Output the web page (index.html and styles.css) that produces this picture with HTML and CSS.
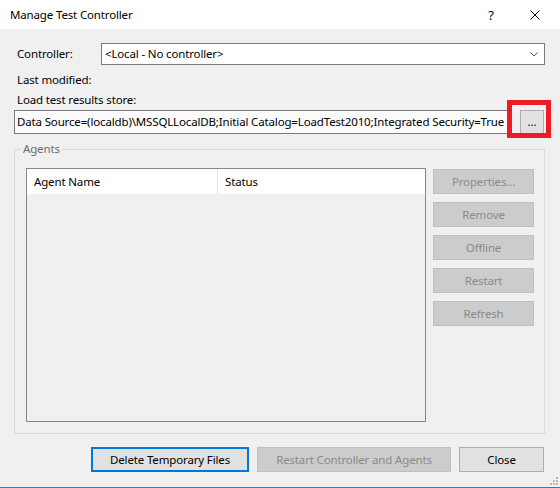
FILE: index.html
```html
<!DOCTYPE html>
<html>
<head>
<meta charset="utf-8">
<link rel="stylesheet" href="styles.css">
</head>
<body>
<div class="window">
  <div class="titlebar">
    <span class="title">Manage Test Controller</span>
    <span class="help">?</span>
    <span class="close"><svg width="10" height="10" viewBox="0 0 10 10"><path d="M0.5 0.5L9.5 9.5M9.5 0.5L0.5 9.5" stroke="#000" stroke-width="1" fill="none"/></svg></span>
  </div>
  <div class="content">
    <div class="row ctrl-row">
      <span class="lbl">Controller:</span>
      <div class="combo">
        <span class="combo-text">&lt;Local - No controller&gt;</span>
        <svg class="chev" width="8" height="5" viewBox="0 0 8 5"><path d="M0.5 0.5L4 4L7.5 0.5" stroke="#555" stroke-width="1" fill="none"/></svg>
      </div>
    </div>
    <div class="line first">Last modified:</div>
    <div class="line">Load test results store:</div>
    <div class="row store-row">
      <div class="textbox">Data Source=(localdb)\MSSQLLocalDB;Initial Catalog=LoadTest2010;Integrated Security=True</div>
      <button class="btn browse">...</button>
      <span class="highlight"></span>
    </div>
    <fieldset class="group">
      <legend class="legend">Agents</legend>
      <div class="group-inner">
        <div class="list">
          <div class="list-head">
            <div class="col col-name">Agent Name</div>
            <div class="col col-status">Status</div>
          </div>
        </div>
        <div class="side">
          <button class="btn disabled">Properties...</button>
          <button class="btn disabled">Remove</button>
          <button class="btn disabled">Offline</button>
          <button class="btn disabled">Restart</button>
          <button class="btn disabled">Refresh</button>
        </div>
      </div>
    </fieldset>
    <div class="footer">
      <button class="btn default w-delete">Delete Temporary Files</button>
      <button class="btn disabled w-restart">Restart Controller and Agents</button>
      <button class="btn w-close">Close</button>
    </div>
  </div>
  <svg class="grip" width="9" height="8" viewBox="0 0 9 8">
    <rect x="7" y="0" width="2" height="2" fill="#b8b8b8"/>
    <rect x="4" y="3" width="2" height="2" fill="#b8b8b8"/>
    <rect x="7" y="3" width="2" height="2" fill="#b8b8b8"/>
    <rect x="1" y="6" width="2" height="2" fill="#b8b8b8"/>
    <rect x="4" y="6" width="2" height="2" fill="#b8b8b8"/>
    <rect x="7" y="6" width="2" height="2" fill="#b8b8b8"/>
  </svg>
</div>
</body>
</html>
```
FILE: styles.css
```css
* { box-sizing: border-box; }
html, body { margin: 0; padding: 0; }
body {
  font-family: "Noto Sans", "Open Sans", sans-serif;
  font-size: 11.5px;
  letter-spacing: -0.15px;
  color: #000;
  background: #f0f0f0;
}
.window {
  position: relative;
  width: 560px;
  height: 488px;
  background: #f0f0f0;
  border-bottom: 1px solid #1883d7;
  overflow: hidden;
}
.titlebar {
  height: 29px;
  background: #fff;
  display: flex;
  align-items: center;
  padding-left: 10px;
}
.title { flex: 1; line-height: 16px; }
.help { width: 10px; margin-right: 34px; font-size: 13px; text-align: center; }
.close { width: 10px; height: 10px; display: flex; margin-right: 20px; }
.close svg { display: block; }

.content { padding: 0 15px 0 14px; }
.row { display: flex; }
.ctrl-row { margin-top: 14px; height: 22px; align-items: center; }
.lbl { width: 87px; padding-left: 3px; line-height: 16px; }
.combo {
  flex: 1;
  height: 22px;
  background: #fff;
  border: 1px solid #7a7a7a;
  display: flex;
  align-items: center;
  padding: 0 6px 0 3px;
}
.combo-text { flex: 1; line-height: 16px; }
.chev { display: block; }

.line { padding-left: 3px; line-height: 16px; height: 16px; }
.line.first { margin-top: 7px; margin-bottom: 4px; }

.store-row { position: relative; margin-top: 2px; height: 24px; }
.textbox {
  flex: 1;
  height: 24px;
  border: 1px solid #7a7a7a;
  background: #fbfbfb;
  padding: 0 2px;
  line-height: 22px;
  white-space: nowrap;
  overflow: hidden;
}
.btn {
  font-family: inherit;
  font-size: inherit;
  letter-spacing: inherit;
  color: #000;
  background: #e1e1e1;
  border: 1px solid #adadad;
  height: 25px;
  padding: 0;
  margin: 0;
  line-height: 16px;
}
.browse { width: 24px; height: 24px; margin-left: 10px; margin-right: 1px; }
.highlight {
  position: absolute;
  left: 493px;
  top: -10px;
  width: 44px;
  height: 38px;
  border: 5px solid #ed1c24;
}

.group {
  margin: 7px 0 0 0;
  padding: 0;
  border: 1px solid #dcdcdc;
  min-width: 0;
}
.legend {
  padding: 0 2px;
  margin-left: 6px;
  color: #6d6d6d;
  line-height: 16px;
}
.group-inner {
  display: flex;
  padding: 11px 10px 11px 11px;
}
.list {
  width: 400px;
  height: 254px;
  border: 1px solid #828790;
  background: #f0f0f0;
}
.list-head {
  display: flex;
  height: 25px;
  background: #fff;
}
.col { line-height: 25px; padding-left: 7px; }
.col-name { width: 191px; border-right: 1px solid #e5e5e5; }
.col-status { flex: 1; }

.side {
  display: flex;
  flex-direction: column;
  gap: 8px;
  margin-left: 7px;
  margin-top: 1px;
}
.side .btn { width: 101px; }
.btn.disabled {
  background: #cccccc;
  border-color: #bfbfbf;
  color: #8a8a8a;
}

.footer {
  display: flex;
  justify-content: flex-end;
  gap: 8px;
  margin-top: 13px;
  padding-right: 1px;
}
.btn.default { border: 2px solid #0078d7; }
.w-delete { width: 158px; }
.w-restart { width: 194px; }
.w-close { width: 85px; }

.grip { position: absolute; right: 2px; bottom: 2px; display: block; }
```
